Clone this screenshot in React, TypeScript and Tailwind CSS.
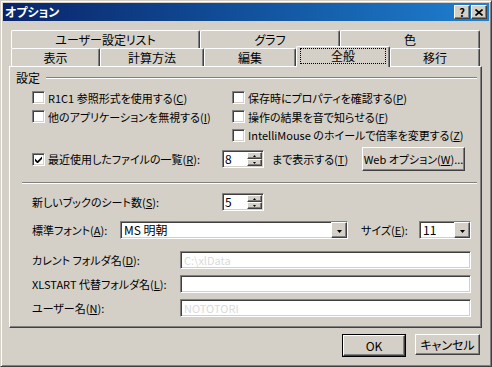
import type { ReactNode } from "react";

const raised =
  "border border-t-white border-l-white border-r-[#404040] border-b-[#404040] shadow-[inset_-1px_-1px_0_#808080]";
const sunken =
  "border border-t-[#808080] border-l-[#808080] border-r-white border-b-white shadow-[inset_1px_1px_0_#404040,inset_-1px_-1px_0_#d4d0c8]";

const Check = ({ checked, children }: { checked?: boolean; children: ReactNode }) => (
  <div className="flex items-center">
    <span className={`w-[13px] h-[13px] bg-white flex items-center justify-center shrink-0 ${sunken}`}>
      {checked && (
        <svg width="7" height="7" viewBox="0 0 7 7">
          <path d="M0 2.5L2.5 5L7 0.5V3L2.5 7.5L0 5Z" fill="black" />
        </svg>
      )}
    </span>
    <span className="ml-[3px] whitespace-nowrap">{children}</span>
  </div>
);

const Arrow = ({ up, w = 5 }: { up?: boolean; w?: number }) => (
  <svg width={w} height={Math.ceil(w / 2)} viewBox={`0 0 ${w} ${Math.ceil(w / 2)}`}>
    <path
      d={up ? `M${w / 2} 0L${w} ${Math.ceil(w / 2)}H0Z` : `M0 0H${w}L${w / 2} ${Math.ceil(w / 2)}Z`}
      fill="black"
    />
  </svg>
);

const Spin = ({ value }: { value: string }) => (
  <div className={`w-[42px] h-[18px] bg-white flex ${sunken}`}>
    <span className="flex-1 pl-[2px] leading-[16px] text-[12px]">{value}</span>
    <div className="w-[16px] flex flex-col p-[1px] pl-0">
      <span className={`h-[8px] bg-[#d4d0c8] flex items-center justify-center ${raised}`}>
        <Arrow up w={3} />
      </span>
      <span className={`h-[7px] bg-[#d4d0c8] flex items-center justify-center ${raised}`}>
        <Arrow w={3} />
      </span>
    </div>
  </div>
);

const Combo = ({ value, w }: { value: string; w: string }) => (
  <div className={`${w} h-[18px] bg-white flex ${sunken}`}>
    <span className="flex-1 pl-[3px] leading-[16px] text-[12px] whitespace-nowrap">{value}</span>
    <span className={`w-[16px] h-[16px] bg-[#d4d0c8] flex items-end justify-center pb-[4px] ${raised}`}>
      <Arrow w={5} />
    </span>
  </div>
);

const Field = ({ value }: { value?: string }) => (
  <div className={`w-[291px] h-[18px] bg-white pl-[3px] leading-[16px] text-[#dadada] ${sunken}`}>
    {value}
  </div>
);

const Etch = ({ className }: { className: string }) => (
  <div className={`h-[2px] border-t border-t-[#808080] border-b border-b-white ${className}`} />
);

const Tab = ({ label, w, selected }: { label: string; w: string; selected?: boolean }) => (
  <div
    className={`${w} flex items-center justify-center rounded-tl-[2px] rounded-tr-[2px] border-t border-l border-r border-t-white border-l-white border-r-[#404040] shadow-[inset_-1px_0_0_#808080] bg-[#d4d0c8] ${
      selected ? "relative z-10 -mt-[2px] h-[21px] -mb-[1px] px-[3px] pt-[1px] pb-[3px]" : "h-[18px]"
    }`}
  >
    {selected ? (
      <span className="w-full h-full border border-dotted border-black flex items-center justify-center">
        {label}
      </span>
    ) : (
      label
    )}
  </div>
);

const Btn = ({ children, w, def }: { children: ReactNode; w: string; def?: boolean }) => (
  <div className={def ? "border border-black" : ""}>
    <div className={`${w} flex items-center justify-center whitespace-nowrap bg-[#d4d0c8] ${raised}`}>
      {children}
    </div>
  </div>
);

export default function App() {
  return (
    <div className="w-[492px] h-[367px] bg-[#d4d0c8] border border-t-[#d4d0c8] border-l-[#d4d0c8] border-r-[#404040] border-b-[#404040] shadow-[inset_1px_1px_0_white,inset_-1px_-1px_0_#808080] p-[2px] font-['Noto_Sans_CJK_JP',sans-serif] text-[11px] leading-[14px] text-black [font-feature-settings:'palt'] overflow-hidden">
      {/* Title bar */}
      <div className="h-[18px] flex items-center bg-gradient-to-r from-[#0a246a] to-[#1f80d0] pl-[2px] pr-[2px]">
        <span className="flex-1 text-white font-bold text-[12px]">オプション</span>
        <span className={`w-[16px] h-[14px] bg-[#d4d0c8] flex items-center justify-center font-bold text-[11px] leading-[11px] ${raised}`}>
          ?
        </span>
        <span className={`ml-[1px] w-[16px] h-[14px] bg-[#d4d0c8] flex items-center justify-center ${raised}`}>
          <svg width="8" height="7" viewBox="0 0 8 7">
            <path d="M0.5 0.5L7.5 6.5M7.5 0.5L0.5 6.5" stroke="black" strokeWidth="1.6" />
          </svg>
        </span>
      </div>

      {/* Tabs */}
      <div className="mt-[9px] ml-[8px] flex text-[12px]">
        <Tab label="ユーザー設定リスト" w="w-[189px]" />
        <Tab label="グラフ" w="w-[140px]" />
        <Tab label="色" w="w-[140px]" />
      </div>
      <div className="ml-[8px] flex items-end h-[18px] text-[12px]">
        <Tab label="表示" w="w-[89px]" />
        <Tab label="計算方法" w="w-[104px]" />
        <Tab label="編集" w="w-[92px]" />
        <Tab label="全般" w="w-[94px]" selected />
        <Tab label="移行" w="w-[90px]" />
      </div>

      {/* Panel */}
      <div className="ml-[6px] w-[473px] h-[262px] border border-t-white border-l-white border-r-[#404040] border-b-[#404040] shadow-[inset_-1px_-1px_0_#808080] pt-[4px]">
        <div className="flex items-center pl-[6px]">
          <span className="text-[12px]">設定</span>
          <Etch className="ml-[6px] w-[431px]" />
        </div>

        <div className="pl-[22px] mt-[3px]">
          <div className="flex h-[19px] items-center">
            <div className="w-[200px]">
              <Check>
                R1C1 参照形式を使用する(<u>C</u>)
              </Check>
            </div>
            <Check>
              保存時にプロパティを確認する(<u>P</u>)
            </Check>
          </div>
          <div className="flex h-[19px] items-center">
            <div className="w-[200px]">
              <Check>
                他のアプリケーションを無視する(<u>I</u>)
              </Check>
            </div>
            <Check>
              操作の結果を音で知らせる(<u>F</u>)
            </Check>
          </div>
          <div className="flex h-[18px] items-center">
            <div className="w-[200px]" />
            <Check>
              IntelliMouse のホイールで倍率を変更する(<u>Z</u>)
            </Check>
          </div>

          <div className="flex h-[24px] items-center mt-[3px]">
            <div className="w-[190px]">
              <Check checked>
                最近使用したファイルの一覧(<u>R</u>):
              </Check>
            </div>
            <Spin value="8" />
            <span className="ml-[8px] w-[90px] whitespace-nowrap">
              まで表示する(<u>T</u>)
            </span>
            <Btn w="w-[103px] h-[24px]">
              Web オプション(<u>W</u>)...
            </Btn>
          </div>
        </div>

        <Etch className="mt-[11px] ml-[12px] w-[455px]" />

        <div className="pl-[22px]">
          <div className="flex items-center mt-[9px]">
            <span className="w-[190px] whitespace-nowrap">
              新しいブックのシート数(<u>S</u>):
            </span>
            <Spin value="5" />
          </div>
          <div className="flex items-center mt-[10px]">
            <span className="w-[88px] whitespace-nowrap">
              標準フォント(<u>A</u>):
            </span>
            <Combo value="MS 明朝" w="w-[228px]" />
            <span className="ml-[13px] w-[58px] whitespace-nowrap">
              サイズ(<u>E</u>):
            </span>
            <Combo value="11" w="w-[52px]" />
          </div>
          <div className="flex items-center mt-[12px]">
            <span className="w-[148px] whitespace-nowrap">
              カレント フォルダ名(<u>D</u>):
            </span>
            <Field value="C:\xlData" />
          </div>
          <div className="flex items-center mt-[6px]">
            <span className="w-[148px] whitespace-nowrap">
              XLSTART 代替フォルダ名(<u>L</u>):
            </span>
            <Field />
          </div>
          <div className="flex items-center mt-[6px]">
            <span className="w-[148px] whitespace-nowrap">
              ユーザー名(<u>N</u>):
            </span>
            <Field value="NOTOTORI" />
          </div>
        </div>
      </div>

      {/* Buttons */}
      <div className="mt-[6px] flex justify-end gap-[9px] pr-[9px] text-[12px]">
        <Btn w="w-[62px] h-[21px]" def>
          OK
        </Btn>
        <Btn w="w-[65px] h-[21px]">キャンセル</Btn>
      </div>
    </div>
  );
}
